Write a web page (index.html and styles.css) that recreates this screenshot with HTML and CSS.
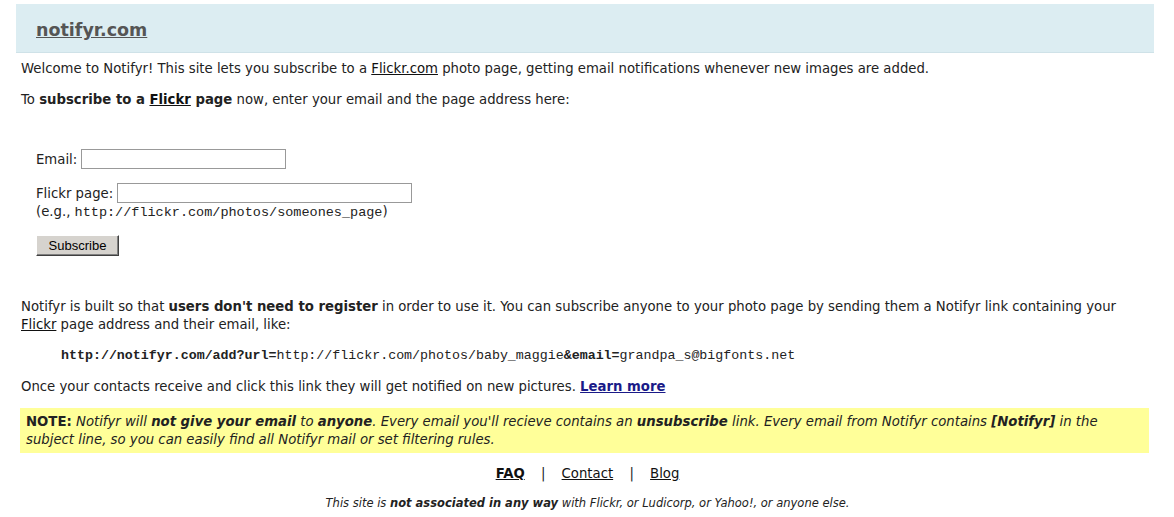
FILE: index.html
```html
<!DOCTYPE html>
<html lang="en">
<head>
    <meta charset="UTF-8">
    <title>notifyr.com</title>
    <link rel="stylesheet" href="styles.css">
</head>
<body>
    <div class="header">
        <h1><a href="#">notifyr.com</a></h1>
    </div>
    <div class="content">
        <p class="intro">Welcome to Notifyr! This site lets you subscribe to a <a href="#">Flickr.com</a> photo page, getting email notifications whenever new images are added.</p>
        <p>To <b>subscribe to a <a href="#">Flickr</a> page</b> now, enter your email and the page address here:</p>

        <form class="subscribe">
            <div class="row">
                <label for="email">Email:</label>
                <input type="text" id="email" class="email">
            </div>
            <div class="row">
                <label for="page">Flickr page:</label>
                <input type="text" id="page" class="page">
            </div>
            <div class="hint">(e.g., <code>http://flickr.com/photos/someones_page</code>)</div>
            <button type="button" class="btn">Subscribe</button>
        </form>

        <p class="about">Notifyr is built so that <b>users don't need to register</b> in order to use it. You can subscribe anyone to your photo page by sending them a Notifyr link containing your <a href="#">Flickr</a> page address and their email, like:</p>
        <p class="sample"><code><b>http://notifyr.com/add?url=</b>http://flickr.com/photos/baby_maggie<b>&amp;email=</b>grandpa_s@bigfonts.net</code></p>
        <p>Once your contacts receive and click this link they will get notified on new pictures. <a href="#" class="more">Learn more</a></p>

        <div class="note">
            <b>NOTE:</b> <i>Notifyr will <b>not give your email</b> to <b>anyone</b>. Every email you'll recieve contains an <b>unsubscribe</b> link. Every email from Notifyr contains <b>[Notifyr]</b> in the subject line, so you can easily find all Notifyr mail or set filtering rules.</i>
        </div>

        <div class="links">
            <a href="#"><b>FAQ</b></a> <span class="sep">|</span> <a href="#">Contact</a> <span class="sep">|</span> <a href="#">Blog</a>
        </div>
        <p class="disclaimer"><i>This site is <b>not associated in any way</b> with Flickr, or Ludicorp, or Yahoo!, or anyone else.</i></p>
    </div>
</body>
</html>
```

FILE: styles.css
```css
body {
    margin: 4px 20px 0 16px;
    font-family: "DejaVu Sans", Verdana, sans-serif;
    font-size: 13.25px;
    color: #222;
    background: #fff;
}
a {
    color: #111;
}
.header {
    background: #dcedf2;
    border-bottom: 1px solid #cfe2e8;
    height: 48px;
    padding-left: 20px;
}
.header h1 {
    margin: 0;
    padding-top: 16px;
    font-size: 17.5px;
    line-height: 20px;
}
.header h1 a {
    color: #555;
}
.content {
    padding-left: 5px;
}
.content p {
    margin: 0;
    line-height: 18px;
}
.intro {
    padding-top: 7px;
}
.intro + p {
    margin-top: 13px !important;
}
.subscribe {
    padding: 40px 0 0 15px;
}
.row {
    display: flex;
    align-items: center;
    gap: 4px;
    margin-bottom: 14px;
}
.row input {
    height: 20px;
    box-sizing: border-box;
    border: 1px solid #999;
    padding: 1px 3px;
    font: inherit;
}
.email {
    width: 205px;
}
.page {
    width: 295px;
}
.row:nth-child(2) {
    margin-bottom: 0;
}
.hint {
    margin-top: 0;
    line-height: 18px;
}
code {
    font-family: "Liberation Mono", "Courier New", monospace;
    font-size: 13.3px;
}
.hint code {
    font-size: 13.5px;
}
.btn {
    margin-top: 13px;
    width: 83px;
    height: 21px;
    background: #d6d3ce;
    border: 1px solid;
    border-color: #fff #404040 #404040 #fff;
    box-shadow: inset -1px -1px 0 #808080;
    font-family: "Liberation Sans", Arial, sans-serif;
    font-size: 13px;
    color: #000;
    padding: 0;
}
.about {
    margin-top: 42px !important;
}
.sample {
    margin-top: 12px !important;
    padding-left: 40px;
}
.sample + p {
    margin-top: 13px !important;
}
a.more {
    color: #1a1a88;
    font-weight: bold;
}
.note {
    margin: 12px 5px 0 -1px;
    background: #ffff99;
    padding: 5px 5px 4px 6px;
    line-height: 18px;
    color: #222;
}
.links {
    text-align: center;
    margin-top: 12px;
    line-height: 18px;
}
.sep {
    margin: 0 12px;
}
.disclaimer {
    text-align: center;
    font-size: 11.5px;
    margin-top: 11px !important;
}
```
